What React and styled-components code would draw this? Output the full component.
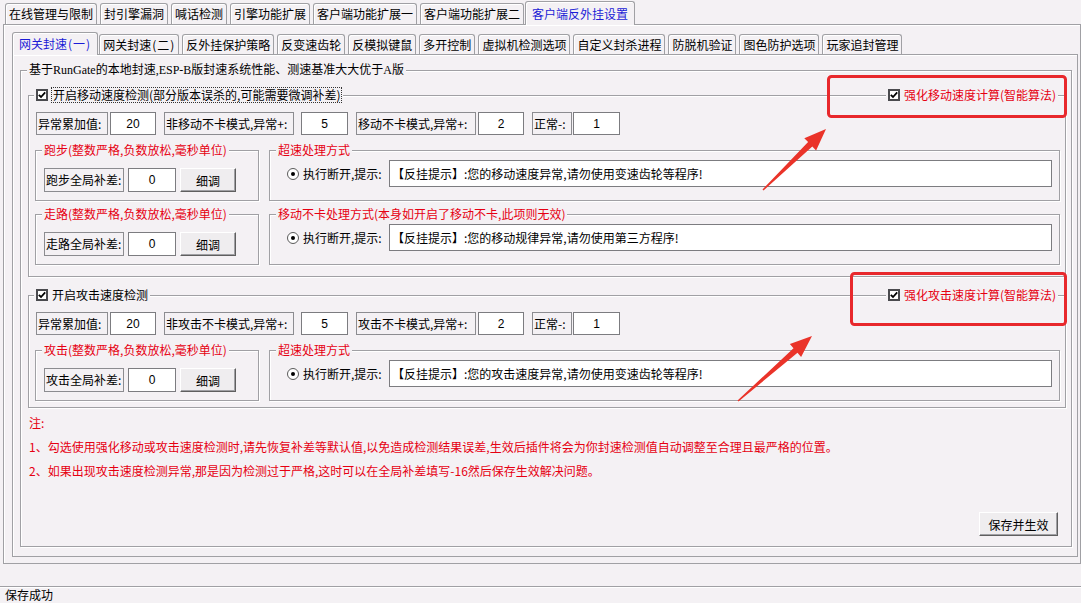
import React from 'react';
import styled, { createGlobalStyle } from 'styled-components';

const BG = '#f4f1f4';
const LINE = '#a0a0a4';
const RED = '#e60012';
const FONT = '"Noto Sans CJK SC", "Liberation Sans", sans-serif';

const Global = createGlobalStyle`
  html, body { margin: 0; padding: 0; background: ${BG}; }
  body { font: 12px ${FONT}; color: #000; }
  * { box-sizing: border-box; }
`;

const Window = styled.div`
  position: relative;
  width: 1081px;
  height: 603px;
  overflow: hidden;
  display: flex;
  flex-direction: column;
  background: ${BG};
`;

const TabStrip = styled.div`
  display: flex;
  align-items: flex-end;
  gap: 3px;
  height: ${p => p.$h}px;
  padding-left: ${p => p.$pl}px;
  position: relative;
  z-index: 1;
  flex: none;
`;

const Tab = styled.div`
  height: ${p => (p.$active ? p.$h + 3 : p.$h)}px;
  padding: 0 ${p => (p.$active ? 6 : 3)}px;
  margin: 0 ${p => (p.$active ? -2 : 0)}px ${p => (p.$active ? -1 : 0)}px;
  border: 1px solid ${LINE};
  border-bottom: none;
  border-radius: 3px 3px 0 0;
  box-shadow: inset 1px 1px 0 #fff;
  background: ${BG};
  color: ${p => (p.$active ? '#1b1bd6' : '#000')};
  display: flex;
  align-items: center;
  white-space: nowrap;
  line-height: 14px;
`;

const Paren = styled.span`
  padding: 0 1px;
`;

const Page = styled.div`
  flex: none;
  display: flex;
  flex-direction: column;
  margin-left: ${p => p.$ml || 0}px;
  height: ${p => p.$h}px;
  border: 1px solid ${LINE};
  box-shadow: inset 1px 1px 0 #fff;
  padding: ${p => p.$pad};
`;

const Frame = styled.div`
  display: flex;
  flex-direction: column;
  border: 1px solid ${LINE};
  box-shadow: inset 1px 1px 0 #fff, 1px 1px 0 #fff;
  margin-top: ${p => p.$mt || 0}px;
  flex: ${p => (p.$grow ? 1 : 'none')};
  width: ${p => (p.$w ? `${p.$w}px` : 'auto')};
`;

const LegendRow = styled.div`
  display: flex;
  justify-content: space-between;
  align-items: center;
  height: 14px;
  margin-top: -8px;
  padding-left: ${p => p.$x}px;
  padding-right: ${p => p.$xr || 0}px;
`;

const Legend = styled.div`
  display: flex;
  align-items: center;
  gap: 4px;
  padding: 0 2px;
  height: 14px;
  line-height: 14px;
  background: ${BG};
  white-space: nowrap;
  color: ${p => (p.$red ? RED : '#000')};
  font-family: ${p => (p.$serif ? `"Liberation Serif", "Noto Sans CJK SC", serif` : FONT)};
`;

const FocusText = styled.span`
  outline: 1px dotted #333;
  outline-offset: 0px;
  padding: 0 1px;
`;

const Body = styled.div`
  display: flex;
  flex-direction: column;
  flex: 1;
  padding: ${p => p.$pad};
`;

const FieldRow = styled.div`
  display: flex;
  align-items: center;
  height: 23px;
  margin-top: 10px;
  margin-left: 1px;
`;

const FieldLabel = styled.div`
  width: ${p => p.$w}px;
  height: ${p => p.$h || 23}px;
  margin-left: ${p => p.$ml || 0}px;
  border: 1px solid #8c8c90;
  padding: 0 1px;
  line-height: ${p => (p.$h || 23) - 2}px;
  white-space: nowrap;
  overflow: hidden;
  flex: none;
`;

const NumBox = styled.input`
  width: ${p => p.$w}px;
  height: ${p => p.$h || 23}px;
  margin-left: ${p => p.$ml || 0}px;
  border: 1px solid #7c7c80;
  background: #fff;
  font: 12px "Liberation Sans", ${FONT};
  color: #000;
  text-align: center;
  padding: 0;
  outline: none;
  flex: none;
`;

const SubRow = styled.div`
  display: flex;
  gap: 10px;
  margin-top: ${p => p.$mt}px;
`;

const InlineRow = styled.div`
  display: flex;
  align-items: center;
  gap: 4px;
  margin-top: ${p => p.$mt}px;
`;

const Button = styled.button`
  width: ${p => p.$w}px;
  height: 24px;
  flex: none;
  font: 12px ${FONT};
  color: #000;
  background: #efedef;
  border: 1px solid;
  border-color: #fff #5f5f5f #5f5f5f #fff;
  box-shadow: inset -1px -1px 0 #a0a0a4;
  padding: 0;
  margin: ${p => p.$m || 0};
  align-self: ${p => p.$self || 'auto'};
`;

const MsgBox = styled.input`
  flex: 1;
  height: 27px;
  border: 1px solid #7c7c80;
  background: #fff;
  font: 12px ${FONT};
  color: #000;
  padding: 0 0 0 2px;
  outline: none;
  min-width: 0;
`;

const RadioLabel = styled.div`
  display: flex;
  align-items: center;
  gap: 4px;
  white-space: nowrap;
  width: 98px;
  flex: none;
`;

const RadioDot = styled.span`
  width: 12px;
  height: 12px;
  border-radius: 50%;
  border: 1px solid #5a5a5a;
  background: #fff;
  display: flex;
  align-items: center;
  justify-content: center;
  flex: none;
  &::after {
    content: '';
    width: 4px;
    height: 4px;
    border-radius: 50%;
    background: #000;
  }
`;

const CheckBox = styled.span`
  width: 12px;
  height: 12px;
  border: 2px solid #4a4a4e;
  background: #fff;
  display: flex;
  align-items: center;
  justify-content: center;
  flex: none;
`;

const Notes = styled.div`
  margin: 3px 0 0 1px;
  color: ${RED};
  line-height: 24px;
  white-space: nowrap;
`;

const StatusBar = styled.div`
  margin-top: auto;
  height: 17px;
  border-top: 1px solid ${LINE};
  box-shadow: inset 0 1px 0 #fff;
  padding-left: 5px;
  line-height: 16px;
  flex: none;
`;

const Overlay = styled.svg`
  position: absolute;
  left: 0;
  top: 0;
  pointer-events: none;
`;

const Check = () => (
  <CheckBox>
    <svg width="8" height="8" viewBox="0 0 8 8">
      <path d="M0.8 3.8 L3 6 L7.2 1.4" fill="none" stroke="#000" strokeWidth="1.8" />
    </svg>
  </CheckBox>
);

const topTabs = ['在线管理与限制', '封引擎漏洞', '喊话检测', '引擎功能扩展', '客户端功能扩展一', '客户端功能扩展二', '客户端反外挂设置'];
const subTabs = [
  ['网关封速', '一'],
  ['网关封速', '二'],
  '反外挂保护策略', '反变速齿轮', '反模拟键鼠', '多开控制', '虚拟机检测选项', '自定义封杀进程', '防脱机验证', '图色防护选项', '玩家追封管理',
];

const sections = [
  {
    title: '开启移动速度检测(部分版本误杀的,可能需要微调补差)',
    focus: true,
    right: '强化移动速度计算(智能算法)',
    pb: 11,
    fields: [
      ['异常累加值:', 72, '20', 46, 0, 2],
      ['非移动不卡模式,异常+:', 130, '5', 47, 8, 7],
      ['移动不卡模式,异常+:', 120, '2', 46, 8, 2],
      ['正常-:', 40, '1', 47, 8, 1],
    ],
    subs: [
      { left: '跑步(整数严格,负数放松,毫秒单位)', label: '跑步全局补差:', right: '超速处理方式', msg: '【反挂提示】:您的移动速度异常,请勿使用变速齿轮等程序!' },
      { left: '走路(整数严格,负数放松,毫秒单位)', label: '走路全局补差:', right: '移动不卡处理方式(本身如开启了移动不卡,此项则无效)', msg: '【反挂提示】:您的移动规律异常,请勿使用第三方程序!' },
    ],
  },
  {
    title: '开启攻击速度检测',
    right: '强化攻击速度计算(智能算法)',
    pb: 6,
    fields: [
      ['异常累加值:', 72, '20', 46, 0, 2],
      ['非攻击不卡模式,异常+:', 130, '5', 47, 8, 7],
      ['攻击不卡模式,异常+:', 120, '2', 46, 8, 2],
      ['正常-:', 40, '1', 47, 8, 1],
    ],
    subs: [
      { left: '攻击(整数严格,负数放松,毫秒单位)', label: '攻击全局补差:', right: '超速处理方式', msg: '【反挂提示】:您的攻击速度异常,请勿使用变速齿轮等程序!' },
    ],
  },
];

function arrowPts(tx, ty, hx, hy) {
  const dx = hx - tx, dy = hy - ty, L = Math.hypot(dx, dy);
  const ux = dx / L, uy = dy / L, nx = -uy, ny = ux;
  const bx = hx - ux * 22, by = hy - uy * 22;
  const p = (x, y, k) => `${(x + nx * k).toFixed(1)},${(y + ny * k).toFixed(1)}`;
  return [p(tx, ty, 0.7), p(bx, by, 3), p(bx, by, 8.5), `${hx},${hy}`, p(bx, by, -8.5), p(bx, by, -3), p(tx, ty, -0.7)].join(' ');
}

const Section = ({ s, mt }) => (
  <Frame $mt={mt}>
    <LegendRow $x={5} $xr={7}>
      <Legend>
        <Check />
        {s.focus ? <FocusText>{s.title}</FocusText> : <span>{s.title}</span>}
      </Legend>
      <Legend $red>
        <Check />
        <span>{s.right}</span>
      </Legend>
    </LegendRow>
    <Body $pad={`0 5px ${s.pb}px 6px`}>
      <FieldRow>
        {s.fields.map(([lab, lw, val, iw, ml, gap]) => (
          <React.Fragment key={lab}>
            <FieldLabel $w={lw} $ml={ml}>{lab}</FieldLabel>
            <NumBox $w={iw} $ml={gap} defaultValue={val} readOnly />
          </React.Fragment>
        ))}
      </FieldRow>
      {s.subs.map((sub, i) => (
        <SubRow key={sub.label} $mt={i === 0 ? 15 : 13}>
          <Frame $w={224}>
            <LegendRow $x={6}>
              <Legend $red>{sub.left}</Legend>
            </LegendRow>
            <Body $pad="0 0 8px 8px">
              <InlineRow $mt={11}>
                <FieldLabel $w={80} $h={24}>{sub.label}</FieldLabel>
                <NumBox $w={48} $h={24} defaultValue="0" readOnly />
                <Button $w={56}>细调</Button>
              </InlineRow>
            </Body>
          </Frame>
          <Frame $grow>
            <LegendRow $x={6}>
              <Legend $red>{sub.right}</Legend>
            </LegendRow>
            <Body $pad="0 7px 0 17px">
              <InlineRow $mt={3}>
                <RadioLabel>
                  <RadioDot />
                  <span>执行断开,提示:</span>
                </RadioLabel>
                <MsgBox defaultValue={sub.msg} readOnly />
              </InlineRow>
            </Body>
          </Frame>
        </SubRow>
      ))}
    </Body>
  </Frame>
);

export default function App() {
  return (
    <Window>
      <Global />
      <TabStrip $h={24} $pl={5}>
        {topTabs.map((t, i) => (
          <Tab key={t} $h={21} $active={i === topTabs.length - 1}>{t}</Tab>
        ))}
      </TabStrip>
      <Page $ml={3} $h={540} $pad="8px 2px 6px 8px">
        <TabStrip $h={21} $pl={2}>
          {subTabs.map((t, i) => (
            <Tab key={Array.isArray(t) ? t.join('') : t} $h={20} $active={i === 0}>
              {Array.isArray(t) ? (
                <>
                  {t[0]}<Paren>(</Paren>{t[1]}<Paren>)</Paren>
                </>
              ) : t}
            </Tab>
          ))}
        </TabStrip>
        <Page $h={503} $pad="15px 5px 9px 7px">
          <Frame $grow>
            <LegendRow $x={6}>
              <Legend $serif>基于RunGate的本地封速,ESP-B版封速系统性能、测速基准大大优于A版</Legend>
            </LegendRow>
            <Body $pad="0 5px 10px 7px">
              {sections.map(s => (
                <Section key={s.title} s={s} mt={18} />
              ))}
              <Notes>
                <div>注:</div>
                <div>1、勾选使用强化移动或攻击速度检测时,请先恢复补差等默认值,以免造成检测结果误差,生效后插件将会为你封速检测值自动调整至合理且最严格的位置。</div>
                <div>2、如果出现攻击速度检测异常,那是因为检测过于严格,这时可以在全局补差填写-16然后保存生效解决问题。</div>
              </Notes>
              <Button $w={79} $m="auto 8px 0 0" $self="flex-end">保存并生效</Button>
            </Body>
          </Frame>
        </Page>
      </Page>
      <StatusBar>保存成功</StatusBar>
      <Overlay width="1081" height="603" viewBox="0 0 1081 603">
        <rect x="828.5" y="76.5" width="237" height="40" rx="3" fill="none" stroke="#e8282c" strokeWidth="3" />
        <rect x="851.5" y="273.5" width="214" height="51" rx="3" fill="none" stroke="#e8282c" strokeWidth="3" />
        <polygon points={arrowPts(763, 190, 826, 129)} fill="#ea3329" />
        <polygon points={arrowPts(738, 401, 812, 336)} fill="#ea3329" />
      </Overlay>
    </Window>
  );
}
